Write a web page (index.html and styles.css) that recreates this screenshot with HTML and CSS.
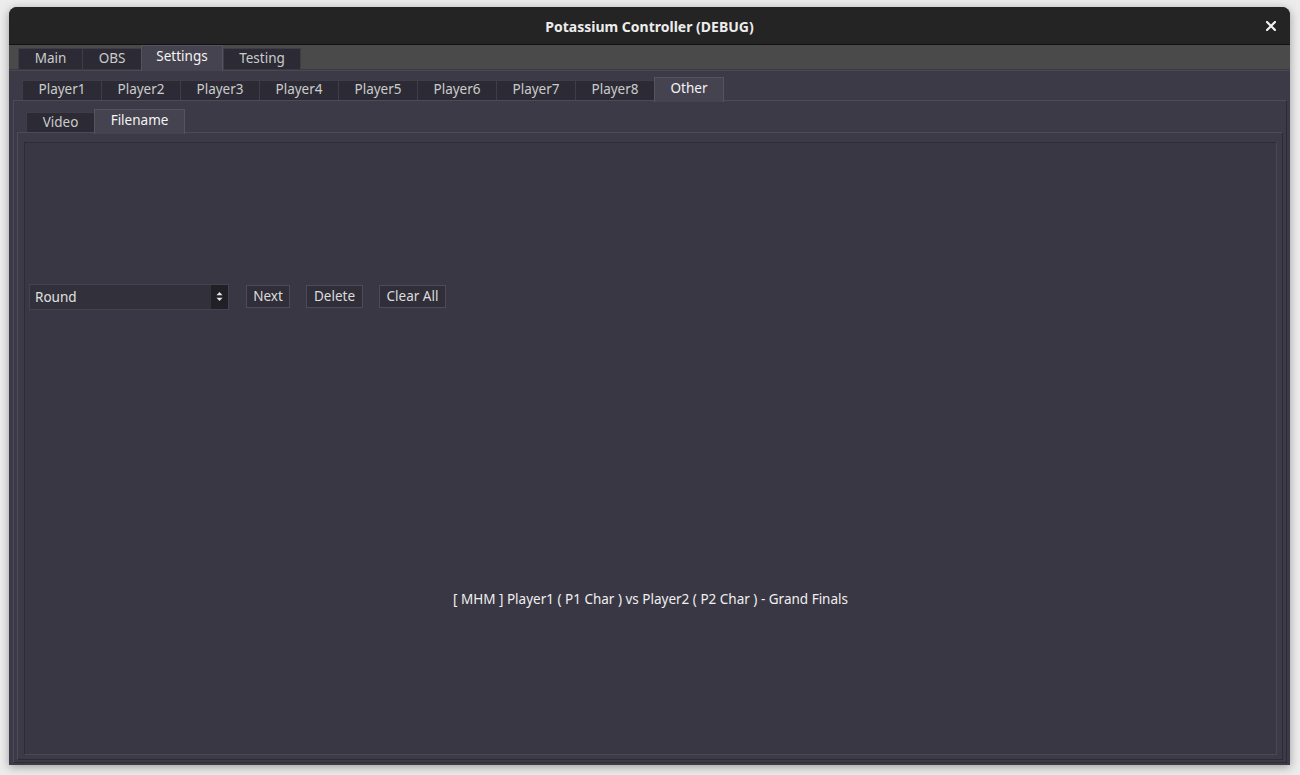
FILE: index.html
```html
<!DOCTYPE html>
<html>
<head>
<meta charset="utf-8">
<link rel="stylesheet" href="styles.css">
</head>
<body>
<div class="window">
  <div class="titlebar">
    <span class="title">Potassium Controller (DEBUG)</span>
    <span class="close"><svg width="10" height="10" viewBox="0 0 10 10"><path d="M1 1 L9 9 M9 1 L1 9" stroke="#f2f2f2" stroke-width="2.2" stroke-linecap="square"/></svg></span>
  </div>
  <div class="tabwidget main-tw">
    <div class="tabbar main-bar">
      <div class="tab t-main">Main</div>
      <div class="tab t-obs">OBS</div>
      <div class="tab sel t-settings">Settings</div>
      <div class="tab t-testing">Testing</div>
    </div>
    <div class="pane main-pane">
      <div class="tabwidget">
        <div class="tabbar bar2">
          <div class="tab">Player1</div>
          <div class="tab">Player2</div>
          <div class="tab">Player3</div>
          <div class="tab">Player4</div>
          <div class="tab">Player5</div>
          <div class="tab">Player6</div>
          <div class="tab">Player7</div>
          <div class="tab">Player8</div>
          <div class="tab sel t-other">Other</div>
        </div>
        <div class="pane pane2">
          <div class="tabwidget">
            <div class="tabbar bar3">
              <div class="tab t-video">Video</div>
              <div class="tab sel t-filename">Filename</div>
            </div>
            <div class="pane pane3">
              <div class="frame">
                <div class="half row-controls">
                  <div class="combo">
                    <span class="combo-text">Round</span>
                    <span class="combo-arrow"><svg width="7" height="11" viewBox="0 0 7 11"><path d="M0.5 4.2 L3.5 1 L6.5 4.2 Z M0.5 6.8 L3.5 10 L6.5 6.8 Z" fill="#e6e6e6"/></svg></span>
                  </div>
                  <button class="btn btn-next">Next</button>
                  <button class="btn btn-del">Delete</button>
                  <button class="btn btn-clear">Clear All</button>
                </div>
                <div class="half row-label">
                  <span class="fname">[ MHM ] Player1 ( P1 Char ) vs Player2 ( P2 Char ) - Grand Finals</span>
                </div>
              </div>
            </div>
          </div>
        </div>
      </div>
    </div>
  </div>
</div>
</body>
</html>
```

FILE: styles.css
```css
html, body {
  margin: 0;
  padding: 0;
}
body {
  background: #ececec;
  width: 1300px;
  height: 775px;
  overflow: hidden;
  font-family: "Noto Sans", "Open Sans", sans-serif;
  font-size: 13px;
  color: #d2d2d2;
}
.window {
  margin: 7px 0 0 9px;
  width: 1281px;
  height: 758px;
  border-radius: 8px 8px 0 0;
  overflow: hidden;
  display: flex;
  flex-direction: column;
  box-shadow: 0 2px 10px rgba(0,0,0,0.35);
  background: #3c3a46;
}
.titlebar {
  height: 37px;
  flex: none;
  background: #242424;
  border-bottom: 1px solid #121212;
  display: flex;
  align-items: center;
  justify-content: center;
  position: relative;
}
.title {
  font-weight: bold;
  font-size: 14px;
  color: #ededed;
  padding-top: 1px;
}
.close {
  position: absolute;
  right: 14px;
  top: 14px;
  width: 10px;
  height: 10px;
  display: flex;
}
.tabwidget {
  display: flex;
  flex-direction: column;
  flex: 1;
  min-height: 0;
}
.tabbar {
  display: flex;
  align-items: flex-end;
  padding-left: 9px;
  flex: none;
  position: relative;
  z-index: 2;
}
.main-bar {
  height: 24px;
  background: #4a4a4a;
  border-bottom: 1px solid #3a3940;
}
.bar2 { height: 23px; }
.bar3 { height: 24px; }
.tab {
  height: 21px;
  box-sizing: border-box;
  padding: 0 0 3px 0;
  width: 79px;
  background: #2c2b35;
  border: 1px solid #3f3e48;
  border-bottom: none;
  border-right: none;
  display: flex;
  align-items: center;
  justify-content: center;
  color: #cbcbcb;
  font-size: 13.5px;
}
.tab:last-child { border-right: 1px solid #3f3e48; }
.t-main { width: 64px; }
.t-obs { width: 59px; }
.t-settings { width: 82px; }
.t-testing { width: 78px; }
.t-other { width: 70px; }
.t-video { width: 68px; }
.t-filename { width: 91px; }
.bar2 .tab { height: 20px; }
.bar3 .tab { height: 20px; padding-bottom: 2px; }
.tab.sel {
  height: 26px;
  margin-bottom: -2px;
  background: #45434f;
  border: 1px solid #55535f;
  border-bottom: none;
  color: #f4f4f4;
  padding-bottom: 5px;
}
.bar2 .tab.sel { height: 25px; }
.bar3 .tab.sel { height: 25px; padding-bottom: 5px; }
.pane {
  flex: 1;
  min-height: 0;
  display: flex;
  flex-direction: column;
  box-sizing: border-box;
  background: #3c3a46;
}
.main-pane {
  padding: 6px 3px 2px 4px;
  border-top: 1px solid #4a4856;
}
.pane2 {
  border: 1px solid #4d4b59;
  border-right-color: #2c2b33;
  border-bottom-color: #2c2b33;
  padding: 7px 3px 2px 3px;
}
.pane3 {
  border: 1px solid #4d4b59;
  border-right-color: #2c2b33;
  border-bottom-color: #2c2b33;
  padding: 9px 5px 4px 6px;
}
.frame {
  flex: 1;
  min-height: 0;
  display: flex;
  flex-direction: column;
  background: #393743;
  border: 1px solid #4a4856;
  border-top-color: #2d2c34;
  border-left-color: #2d2c34;
}
.half {
  flex: 1;
  display: flex;
  align-items: center;
}
.row-controls {
  padding-left: 4px;
  padding-top: 1px;
}
.row-label {
  justify-content: center;
}
.fname {
  color: #f0f0f0;
  font-size: 13.5px;
  padding-bottom: 6px;
}
.combo {
  width: 200px;
  height: 26px;
  box-sizing: border-box;
  background: #32303b;
  border: 1px solid #44424f;
  display: flex;
  align-items: stretch;
}
.combo-text {
  flex: 1;
  display: flex;
  align-items: center;
  padding-left: 5px;
  color: #e0e0e0;
  font-size: 13.5px;
}
.combo-arrow {
  width: 17px;
  background: #212027;
  display: flex;
  align-items: center;
  justify-content: center;
}
.btn {
  font-family: inherit;
  font-size: 13.5px;
  color: #dcdcdc;
  height: 23px;
  box-sizing: border-box;
  background: #302e39;
  border: 1px solid #4d4b58;
  padding: 0 6px 1px 6px;
  display: flex;
  align-items: center;
  margin-left: 16px;
}
.btn-next { margin-left: 17px; width: 44px; justify-content: center; }
.btn-del { width: 57px; justify-content: center; }
.btn-clear { width: 67px; justify-content: center; }
```
